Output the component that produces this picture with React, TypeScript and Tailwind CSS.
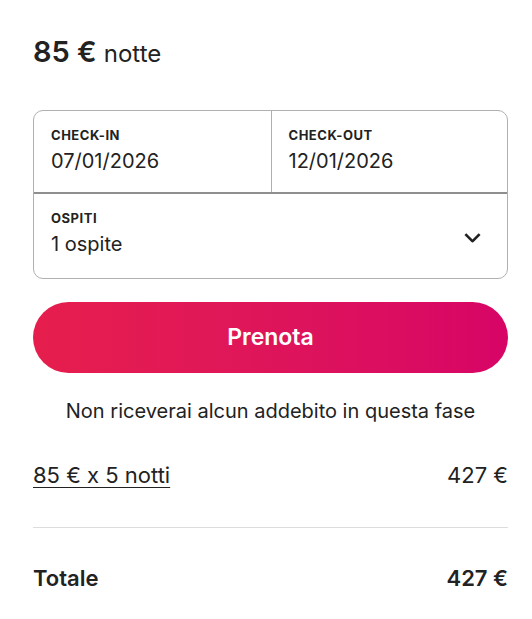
import React from "react";

const ChevronDown = () => (
  <svg viewBox="0 0 32 32" className="w-[19px] h-[19px]" fill="none" stroke="#222222" strokeWidth={4.5}>
    <path d="M28 12 16.7 23.3a1 1 0 0 1-1.4 0L4 12" />
  </svg>
);

const Field = ({ label, value, className }: { label: string; value: string; className?: string }) => (
  <div className={`flex flex-col pl-[17px] pt-[16px] ${className ?? ""}`}>
    <span className="text-[13px] font-bold uppercase leading-4 tracking-[0.04em]">{label}</span>
    <span className="text-[20px] leading-6 mt-[6px]">{value}</span>
  </div>
);

export default function App() {
  return (
    <div className="min-h-[619px] bg-white text-[#222222] font-['Inter',sans-serif] overflow-hidden">
      <div className="-ml-[6px] -mt-[6px] min-h-[625px] rounded-tl-[14px] border-l border-t border-[#f2f2f2] pl-[38px] pt-[39px]">
        <div className="w-[475px]">
          <div className="flex items-baseline gap-[7px] h-9">
            <span className="text-[29px] font-semibold leading-9">85 €</span>
            <span className="text-[24px] leading-7">notte</span>
          </div>

          <div className="mt-[40px] rounded-[10px] border border-[#b0b0b0]">
            <div className="grid grid-cols-2 h-[83px] border-b-2 border-[#8f8f8f]">
              <Field label="Check-in" value="07/01/2026" />
              <Field label="Check-out" value="12/01/2026" className="border-l border-[#b0b0b0]" />
            </div>
            <div className="flex items-center justify-between h-[84px] pr-[25px]">
              <Field label="Ospiti" value="1 ospite" className="self-start" />
              <ChevronDown />
            </div>
          </div>

          <button className="mt-[23px] w-full h-[71px] rounded-full bg-gradient-to-r from-[#e61e4d] to-[#d70466] text-white text-[23px] font-semibold">
            Prenota
          </button>

          <p className="mt-[24px] text-center text-[20px] leading-7">Non riceverai alcun addebito in questa fase</p>

          <div className="mt-[36px] flex justify-between text-[22px] leading-7">
            <span className="underline underline-offset-[4px] decoration-1">85 € x 5 notti</span>
            <span>427 €</span>
          </div>

          <div className="mt-[38px] border-t border-[#dddddd]" />

          <div className="mt-[36px] flex justify-between text-[22px] leading-7 font-semibold">
            <span>Totale</span>
            <span>427 €</span>
          </div>
        </div>
      </div>
    </div>
  );
}
